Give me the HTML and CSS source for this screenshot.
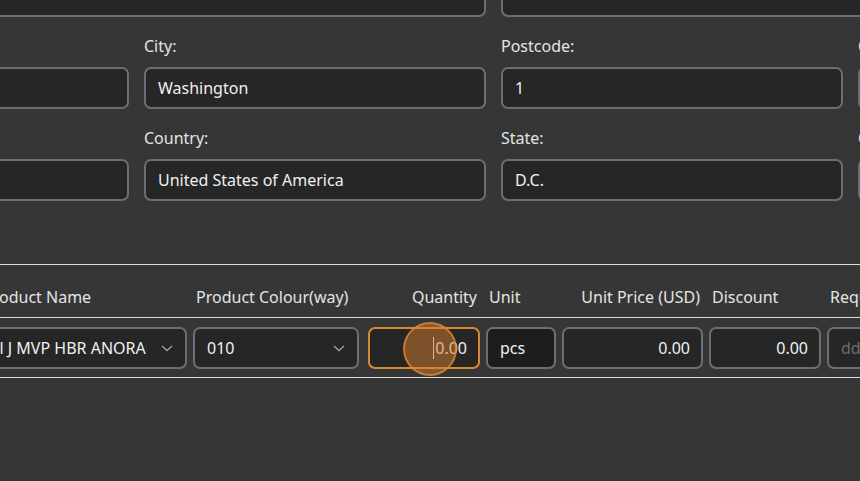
FILE: index.html
```html
<!DOCTYPE html>
<html>
<head>
<meta charset="utf-8">
<link rel="stylesheet" href="styles.css">
</head>
<body>
<div class="page">
  <div class="form">
    <div class="field wide">
      <div class="label">Address:</div>
      <div class="input"></div>
    </div>
    <div class="field wide">
      <div class="label">Address line 2:</div>
      <div class="input"></div>
    </div>

    <div class="field">
      <div class="label">District:</div>
      <div class="input"></div>
    </div>
    <div class="field">
      <div class="label">City:</div>
      <div class="input">Washington</div>
    </div>
    <div class="field">
      <div class="label">Postcode:</div>
      <div class="input">1</div>
    </div>
    <div class="field">
      <div class="label">Contact:</div>
      <div class="input"></div>
    </div>

    <div class="field">
      <div class="label">Region:</div>
      <div class="input"></div>
    </div>
    <div class="field">
      <div class="label">Country:</div>
      <div class="input">United States of America</div>
    </div>
    <div class="field">
      <div class="label">State:</div>
      <div class="input">D.C.</div>
    </div>
    <div class="field">
      <div class="label">Currency:</div>
      <div class="input"></div>
    </div>
  </div>

  <div class="table">
    <div class="rule"></div>
    <div class="cols thead">
      <div class="th">Product Name</div>
      <div class="th">Product Colour(way)</div>
      <div class="th right">Quantity</div>
      <div class="th">Unit</div>
      <div class="th right">Unit Price (USD)</div>
      <div class="th">Discount</div>
      <div class="th">Request Date</div>
    </div>
    <div class="rule"></div>
    <div class="cols trow">
      <div class="cell">
        <div class="input select">
          <span class="select-text scrolled">Jordan Full J MVP HBR ANORAK</span>
          <svg class="chev" width="12" height="7" viewBox="0 0 12 7"><path d="M1 1 L6 5.5 L11 1" fill="none" stroke="#9c9ea3" stroke-width="1.4"/></svg>
        </div>
      </div>
      <div class="cell">
        <div class="input select colour">
          <span class="select-text">010</span>
          <svg class="chev" width="12" height="7" viewBox="0 0 12 7"><path d="M1 1 L6 5.5 L11 1" fill="none" stroke="#9c9ea3" stroke-width="1.4"/></svg>
        </div>
      </div>
      <div class="cell qty">
        <div class="input num focused"><span class="caret"></span>0.00</div>
        <div class="touch"></div>
      </div>
      <div class="cell">
        <div class="input unit">pcs</div>
      </div>
      <div class="cell">
        <div class="input num">0.00</div>
      </div>
      <div class="cell">
        <div class="input num">0.00</div>
      </div>
      <div class="cell">
        <div class="input placeholder">dd/mm/yyyy</div>
      </div>
    </div>
    <div class="rule"></div>
  </div>
</div>
</body>
</html>
```
FILE: styles.css
```css
html, body {
  margin: 0;
  padding: 0;
}

body {
  background: #363636;
  font-family: "Noto Sans", "Open Sans", sans-serif;
  font-size: 16px;
  color: #e6e6e6;
  width: 860px;
  height: 481px;
  overflow: hidden;
}

.page {
  width: 860px;
  height: 481px;
  overflow: hidden;
}

.form {
  display: grid;
  grid-template-columns: repeat(4, 342px);
  column-gap: 15px;
  row-gap: 18px;
  margin: -57px 0 0 -213px;
}

.field {
  display: flex;
  flex-direction: column;
  gap: 10px;
}

.field.wide {
  grid-column: span 2;
}

.label {
  line-height: 22px;
  color: #e4e4e4;
  white-space: nowrap;
}

.input {
  height: 42px;
  box-sizing: border-box;
  border: 2px solid #6b6e75;
  border-radius: 7px;
  background: #262626;
  padding: 0 12px;
  display: flex;
  align-items: center;
  color: #f0f0f0;
  white-space: nowrap;
  overflow: hidden;
}

.table {
  margin-top: 63px;
}

.rule {
  height: 1px;
  background: #dcdcdc;
}

.cols {
  display: grid;
  grid-template-columns: 207px 169px 112px 70px 141px 112px 200px;
  column-gap: 6px;
  margin-left: -20px;
}

.thead {
  height: 52px;
  box-sizing: border-box;
  align-items: end;
  padding-bottom: 9px;
}

.th {
  line-height: 22px;
  padding: 0 3px;
  color: #e4e4e4;
  white-space: nowrap;
}

.th.right {
  text-align: right;
}

.trow {
  height: 59px;
  box-sizing: border-box;
  padding: 9px 0 8px;
}

.cell {
  position: relative;
}

.select {
  padding-right: 12px;
  gap: 14px;
}

.select.colour {
  width: 166px;
}

.select-text {
  flex: 1;
  overflow: hidden;
  white-space: nowrap;
}

.select-text.scrolled {
  text-indent: -70px;
}

.chev {
  flex: none;
}

.num {
  justify-content: flex-end;
  padding-right: 11px;
}

.focused {
  border-color: #d68a2e;
}

.caret {
  width: 1px;
  height: 22px;
  background: #e8e8e8;
  margin-right: 1px;
}

.unit {
  background: #1d1d1d;
}

.placeholder {
  color: #6c6c6c;
}

.touch {
  position: absolute;
  left: 35px;
  top: -5px;
  width: 54px;
  height: 54px;
  box-sizing: border-box;
  border-radius: 50%;
  background: rgba(212, 125, 45, 0.5);
  border: 2px solid rgba(226, 136, 56, 0.75);
}
```
